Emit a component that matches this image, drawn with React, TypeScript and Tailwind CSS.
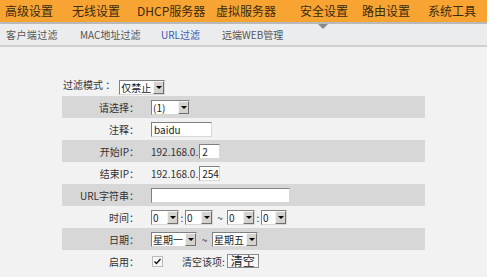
import React from 'react'

const topMenu = [
  { label: '高级设置', w: 'w-[67px]' },
  { label: '无线设置', w: 'w-[65px]' },
  { label: 'DHCP服务器', w: 'w-[79px]' },
  { label: '虚拟服务器', w: 'w-[84px]' },
  { label: '安全设置', w: 'w-[62px]' },
  { label: '路由设置', w: 'w-[66px]' },
  { label: '系统工具', w: 'w-[56px]' },
]

const subMenu = [
  { label: '客户端过滤', w: 'w-[74px]' },
  { label: 'MAC地址过滤', w: 'w-[81px]' },
  { label: 'URL过滤', w: 'w-[61px]' },
  { label: '远端WEB管理', w: 'w-[70px]' },
]

function Select({ value, width }: { value: string; width: string }) {
  return (
    <div className={`inline-flex h-[15px] items-stretch border border-[#808080] border-r-[#d8d8d8] border-b-[#d8d8d8] bg-white ${width}`}>
      <span className="flex-1 pl-[1px] text-[10px] leading-[13px] text-[#222] whitespace-nowrap overflow-hidden">{value}</span>
      <span className="flex w-[11px] flex-none items-center justify-center border border-[#f4f4f4] border-r-[#707070] border-b-[#707070] bg-[#d6d3ce]">
        <span className="h-0 w-0 border-x-[3px] border-t-[3px] border-x-transparent border-t-black" />
      </span>
    </div>
  )
}

function Input({ value, width }: { value: string; width: string }) {
  return (
    <div className={`h-[15px] border border-[#808080] border-r-[#d8d8d8] border-b-[#d8d8d8] bg-white pl-[2px] text-[10px] leading-[13px] text-[#222] ${width}`}>
      {value}
    </div>
  )
}

function Row({ label, gray, children }: { label: string; gray?: boolean; children: React.ReactNode }) {
  return (
    <div className={`flex h-[22px] items-center ${gray ? 'bg-[#d7d7d7]' : ''}`}>
      <div className="w-[77px] text-right text-[10px] text-[#333]">{label}</div>
      <div className="flex items-center pl-[12px] text-[10px] text-[#333]">{children}</div>
    </div>
  )
}

export default function App() {
  return (
    <div
      className="w-[489px] h-[277px] overflow-hidden bg-[#f2f2f2] border-r-2 border-white"
      style={{ fontFamily: '"Noto Sans CJK SC", "Liberation Sans", sans-serif' }}
    >
      {/* Top menu */}
      <div className="flex h-[22px] items-center bg-[#f8a433] pl-[5px] text-[12px] text-[#3a2a10]">
        {topMenu.map(item => (
          <span key={item.label} className={`flex-none whitespace-nowrap ${item.w}`}>{item.label}</span>
        ))}
      </div>
      <div className="h-[2px] bg-[#b9b9b9]" />

      {/* Sub menu */}
      <div className="relative flex h-[21px] items-center bg-[#ebecee] pl-[6px] text-[10px] text-[#555]">
        {subMenu.map((item, i) => (
          <span key={item.label} className={`flex-none whitespace-nowrap ${item.w} ${i === 0 ? 'tracking-[0.4px]' : ''} ${i === 2 ? 'text-[#3a5bb5]' : ''}`}>
            {item.label}
          </span>
        ))}
        <span className="absolute left-[318px] top-0 h-0 w-0 border-x-[5px] border-t-[5px] border-x-transparent border-t-[#8a8a8a]" />
      </div>
      <div className="h-[2px] bg-[#cfcfcf]" />

      {/* Content */}
      <div className="pl-[62px] pt-[26px]">
        <div className="flex h-[23px] items-center">
          <span className="pl-[1px] text-[10px] text-[#333]">过滤模式 ：</span>
          <div className="pl-[4px]">
            <Select value="仅禁止" width="w-[46px]" />
          </div>
        </div>

        <div className="w-[363px]">
          <Row label="请选择：" gray>
            <Select value="(1)" width="w-[39px]" />
          </Row>
          <Row label="注释：">
            <Input value="baidu" width="w-[61px]" />
          </Row>
          <Row label="开始IP：" gray>
            <span className="pr-[1px]">192.168.0.</span>
            <Input value="2" width="w-[21px]" />
          </Row>
          <Row label="结束IP：">
            <span className="pr-[1px]">192.168.0.</span>
            <Input value="254" width="w-[21px]" />
          </Row>
          <Row label="URL字符串：" gray>
            <Input value="" width="w-[139px]" />
          </Row>
          <Row label="时间：">
            <Select value="0" width="w-[28px]" />
            <span className="w-[6px] text-center">:</span>
            <Select value="0" width="w-[28px]" />
            <span className="w-[14px] text-center">~</span>
            <Select value="0" width="w-[28px]" />
            <span className="w-[6px] text-center">:</span>
            <Select value="0" width="w-[26px]" />
          </Row>
          <Row label="日期：" gray>
            <Select value="星期一" width="w-[46px]" />
            <span className="w-[15px] text-center">~</span>
            <Select value="星期五" width="w-[46px]" />
          </Row>
          <Row label="启用：">
            <span className="ml-[1px] flex h-[11px] w-[11px] items-center justify-center border border-[#bbb] bg-[#f8f8f8]">
              <svg width="9" height="9" viewBox="0 0 9 9">
                <path d="M1.5 4.5 L3.5 6.5 L7.5 2" fill="none" stroke="#111" strokeWidth="1.4" />
              </svg>
            </span>
            <span className="pl-[19px]">清空该项:</span>
            <span className="ml-[2px] h-[14px] border border-[#8a8a8a] bg-[#f7f7f7] px-[3px] text-[12px] leading-[12px] text-[#222]">清空</span>
          </Row>
        </div>
      </div>
    </div>
  )
}
